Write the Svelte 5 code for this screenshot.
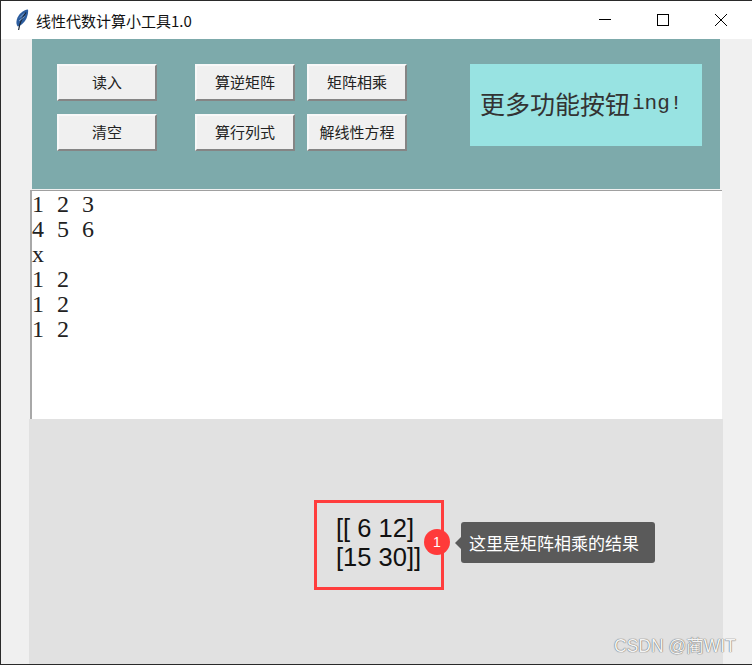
<script lang="ts">
  const leftButtons = ['读入', '清空'];
  const midButtons = ['算逆矩阵', '算行列式'];
  const rightButtons = ['矩阵相乘', '解线性方程'];
  const inputLines = ['1 2 3', '4 5 6', 'x', '1 2', '1 2', '1 2'];
</script>

<div class="window">
  <header class="titlebar">
    <svg class="feather" width="14" height="22" viewBox="0 0 14 22">
      <path d="M13 0.5 C8 1 3.5 5 1.8 10.5 C1 13.5 1.4 16 2.8 17.5 C6.5 16.5 10.5 12.5 12 8 C13 5 13.4 2.5 13 0.5 Z" fill="#2b5c9e" />
      <path d="M11 3.5 C7.5 8 4.6 14 3.6 21" stroke="#1a2533" stroke-width="1.2" fill="none" />
      <path d="M5 8.5 L9 4.5 M4 12 L9.5 7.5" stroke="#9dbbe0" stroke-width="0.8" fill="none" />
    </svg>
    <span class="title">线性代数计算小工具1.0</span>
    <div class="controls">
      <svg width="12" height="12" viewBox="0 0 12 12"><path d="M0 5.5 H12" stroke="#000" /></svg>
      <svg width="12" height="12" viewBox="0 0 12 12"><rect x="0.5" y="0.5" width="11" height="11" fill="none" stroke="#000" /></svg>
      <svg width="12" height="12" viewBox="0 0 12 12"><path d="M0 0 L12 12 M12 0 L0 12" stroke="#000" /></svg>
    </div>
  </header>

  <main class="client">
    <section class="toolbar">
      <div class="col first">
        {#each leftButtons as b}<button>{b}</button>{/each}
      </div>
      <div class="col second">
        {#each midButtons as b}<button>{b}</button>{/each}
      </div>
      <div class="col third">
        {#each rightButtons as b}<button>{b}</button>{/each}
      </div>
      <div class="more">更多功能按钮<span class="latin">ing!</span></div>
    </section>

    <section class="input">
      {#each inputLines as line}<div>{line}</div>{/each}
    </section>

    <section class="output">
      <div class="result">[[ 6 12]<br />[15 30]]</div>
      <div class="marker">1</div>
      <div class="tip">这里是矩阵相乘的结果</div>
      <div class="watermark">CSDN @蔺WIT</div>
    </section>
  </main>
</div>

<style>
  :global(body) {
    margin: 0;
    background: #f0f0f0;
  }

  .window {
    width: 752px;
    height: 665px;
    box-sizing: border-box;
    border-top: 1px solid #2a2a2a;
    border-left: 1px solid #2a2a2a;
    border-bottom: 1px solid #2a2a2a;
    background: #f0f0f0;
    display: flex;
    flex-direction: column;
    overflow: hidden;
    font-family: "Noto Sans CJK SC", "Liberation Sans", sans-serif;
  }

  .titlebar {
    height: 38px;
    flex: none;
    background: #fff;
    display: flex;
    align-items: center;
    padding-left: 14px;
  }

  .feather {
    margin-right: 7px;
  }

  .title {
    font-size: 15px;
    color: #111;
    white-space: nowrap;
    font-family: "Noto Sans CJK SC", sans-serif;
  }

  .controls {
    margin-left: auto;
    display: flex;
    gap: 46px;
    padding-right: 25px;
  }

  .controls svg {
    display: block;
  }

  .client {
    flex: 1;
    display: flex;
    flex-direction: column;
    position: relative;
  }

  .toolbar {
    width: 688px;
    height: 150px;
    margin-left: 31px;
    box-sizing: border-box;
    padding: 25px 18px 0 25px;
    background: #7daaab;
    display: flex;
    align-items: flex-start;
  }

  .col {
    display: flex;
    flex-direction: column;
    gap: 13px;
  }

  .second {
    margin-left: 38px;
  }

  .third {
    margin-left: 12px;
  }

  button {
    width: 100px;
    height: 37px;
    padding: 0 0 3px;
    box-sizing: border-box;
    background: #f0f0f0;
    border: 2px solid;
    border-color: #f8f8f8 #858585 #858585 #f8f8f8;
    font-family: "Noto Sans CJK SC", sans-serif;
    font-size: 15px;
    color: #222;
  }

  .more {
    width: 232px;
    height: 82px;
    margin-left: auto;
    box-sizing: border-box;
    padding: 0 0 4px 10px;
    background: #98e3e2;
    display: flex;
    align-items: center;
    font-family: "Noto Sans CJK SC", serif;
    font-size: 25px;
    color: #333;
    white-space: nowrap;
  }

  .latin {
    margin-left: 2px;
    font-family: "Liberation Mono", monospace;
    font-size: 21px;
  }

  .input {
    width: 692px;
    height: 229px;
    margin-left: 29px;
    margin-top: 1px;
    box-sizing: border-box;
    flex: none;
    background: #fff;
    border-top: 1px solid #a0a0a0;
    border-left: 2px solid #a8a8a8;
    padding: 1px 0 0 0;
    font-family: "Liberation Serif", serif;
    font-size: 24px;
    line-height: 25px;
    word-spacing: 7px;
    color: #222;
  }

  .output {
    flex: 1;
    width: 694px;
    margin-left: 28px;
    background: #e1e1e1;
    position: relative;
  }

  .result {
    position: absolute;
    left: 285px;
    top: 81px;
    width: 105px;
    height: 73px;
    border: 3px solid #ff3d3d;
    box-sizing: content-box;
    padding: 11px 0 0 19px;
    font-family: "Liberation Sans", sans-serif;
    font-size: 25.5px;
    line-height: 29px;
    color: #111;
    white-space: nowrap;
  }

  .marker {
    position: absolute;
    left: 395px;
    top: 110px;
    width: 26px;
    height: 26px;
    border-radius: 50%;
    background: #ff3a3a;
    color: #fff;
    font-family: "Liberation Sans", sans-serif;
    font-size: 14px;
    display: flex;
    align-items: center;
    justify-content: center;
  }

  .tip {
    position: absolute;
    left: 432px;
    top: 103px;
    width: 194px;
    height: 41px;
    box-sizing: border-box;
    padding-left: 8px;
    background: #5a5a5a;
    border-radius: 3px;
    color: #fff;
    font-size: 17px;
    display: flex;
    align-items: center;
    white-space: nowrap;
  }

  .tip::before {
    content: "";
    position: absolute;
    left: -6px;
    top: 15px;
    border-top: 6px solid transparent;
    border-bottom: 6px solid transparent;
    border-right: 6px solid #5a5a5a;
  }

  .watermark {
    position: absolute;
    left: 585px;
    top: 213px;
    font-family: "Liberation Sans", "Noto Sans CJK SC", sans-serif;
    font-size: 17.5px;
    color: #f4f4f4;
    text-shadow: 0 0 1px #666, 0 0 1px #666;
    white-space: nowrap;
  }
</style>
